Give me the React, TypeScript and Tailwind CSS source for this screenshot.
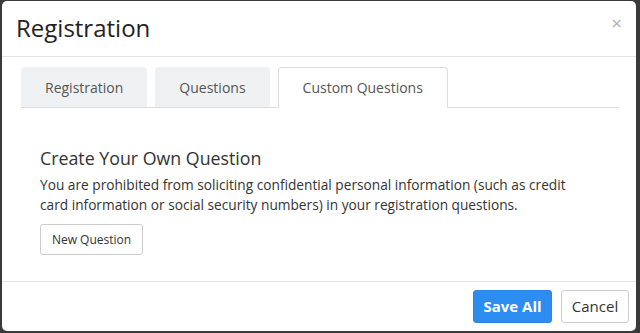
import React from "react";

export default function App() {
  const font = { fontFamily: '"Open Sans", "Segoe UI", sans-serif' };
  return (
    <div className="w-[640px] h-[333px] bg-[#3a3a3a] pt-px pl-[2px]" style={font}>
      <div className="w-[634px] h-[330px] bg-white rounded-[5px] flex flex-col overflow-hidden">
        <div className="h-[56px] border-b border-[#e5e5e5] flex items-center justify-between pl-[14px] pr-[14px] shrink-0">
          <h1 className="text-[24px] text-[#222] leading-none -mt-[1px]">Registration</h1>
          <span className="text-[19px] text-[#b0b0b0] leading-none -mt-[10px]">×</span>
        </div>
        <div className="flex-1 pl-[19px] pr-[17px] pt-[10px]">
          <div className="flex gap-2 border-b border-[#ddd] h-[41px]">
            <div className="h-[40px] px-6 rounded-t-[4px] bg-[#f0f1f3] text-[14px] text-[#555] flex items-center">Registration</div>
            <div className="h-[40px] px-6 rounded-t-[4px] bg-[#f0f1f3] text-[14px] text-[#555] flex items-center">Questions</div>
            <div className="h-[41px] px-6 rounded-t-[4px] bg-white border border-[#ddd] border-b-white text-[14px] text-[#555] flex items-center">Custom Questions</div>
          </div>
          <div className="pl-[19px] pt-[38px]">
            <h2 className="text-[17.8px] text-[#333] leading-[24px]">Create Your Own Question</h2>
            <p className="text-[13.7px] text-[#333] leading-[20px] mt-[5px] w-[540px]">
              You are prohibited from soliciting confidential personal information (such as credit card information or social security numbers) in your registration questions.
            </p>
            <button className="mt-[9px] h-[31px] w-[103px] border border-[#ccc] rounded-[3px] bg-white text-[12px] text-[#333]">New Question</button>
          </div>
        </div>
        <div className="h-[50px] border-t border-[#e5e5e5] flex items-center justify-end gap-[9px] pr-[7px] shrink-0">
          <button className="h-[33px] w-[79px] rounded-[3px] bg-[#2d8cf0] border border-[#2a85e6] text-white font-bold text-[15px]">Save All</button>
          <button className="h-[33px] w-[68px] rounded-[3px] bg-white border border-[#ccc] text-[#333] text-[15px]">Cancel</button>
        </div>
      </div>
    </div>
  );
}
